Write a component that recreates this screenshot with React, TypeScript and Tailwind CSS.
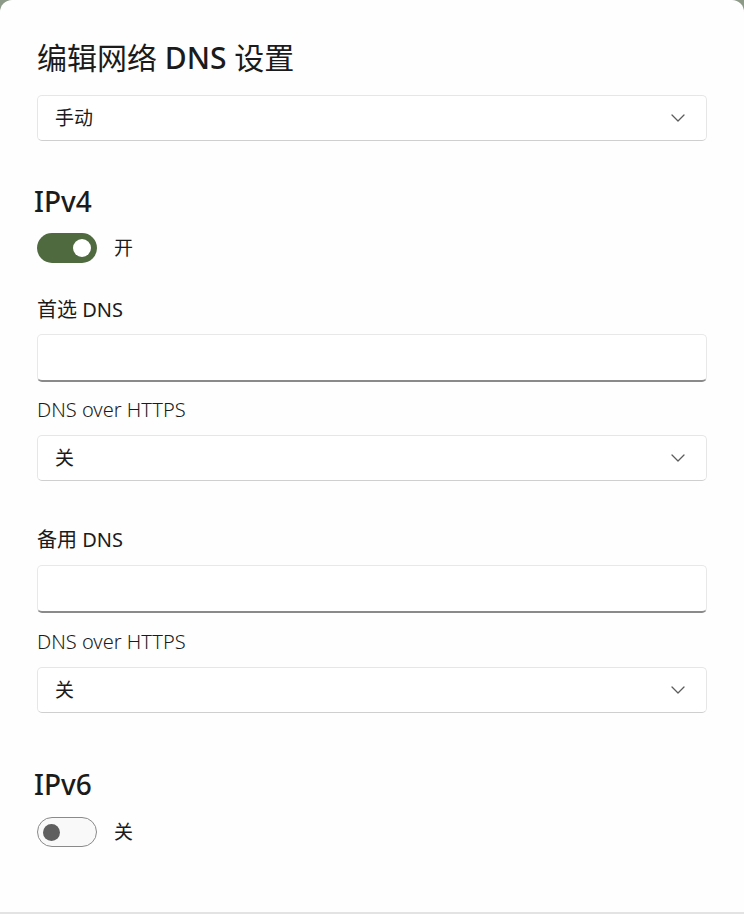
import React from 'react';

const font = { fontFamily: '"Noto Sans", "Noto Sans CJK SC", sans-serif' };

const Chevron: React.FC = () => (
  <svg width="14" height="8" viewBox="0 0 14 8" fill="none" className="text-[#5c5c5c]">
    <path d="M1 1l6 6 6-6" stroke="currentColor" strokeWidth="1.3" strokeLinecap="round" strokeLinejoin="round" />
  </svg>
);

const Select: React.FC<{ value: string }> = ({ value }) => (
  <div className="h-[46px] w-full rounded-[5px] border border-[#e6e6e6] border-b-[#cfcfcf] bg-white flex items-center justify-between pl-[17px] pr-[21px]">
    <span className="text-[19px] text-[#1b1b1b] leading-none">{value}</span>
    <Chevron />
  </div>
);

const TextBox: React.FC = () => (
  <div className="h-[48px] w-full rounded-[5px] border border-[#e8e8e8] border-b-2 border-b-[#8a8a8a] bg-white" />
);

const Toggle: React.FC<{ on: boolean; label: string }> = ({ on, label }) => (
  <div className="flex items-center h-[30px]">
    {on ? (
      <div className="w-[60px] h-[30px] rounded-full bg-[#4e6a3e] flex items-center justify-end pr-[6px]">
        <div className="w-[18px] h-[18px] rounded-full bg-white" />
      </div>
    ) : (
      <div className="w-[60px] h-[30px] rounded-full border-[1.5px] border-[#8a8a8a] bg-[#f9f9f9] flex items-center pl-[5px]">
        <div className="w-[17px] h-[17px] rounded-full bg-[#5f5f5f]" />
      </div>
    )}
    <span className="ml-[17px] text-[19px] text-[#1b1b1b]">{label}</span>
  </div>
);

const Label: React.FC<{ children: React.ReactNode; light?: boolean }> = ({ children, light }) => (
  <div
    className={
      light
        ? 'h-[26px] leading-[26px] text-[20px] font-light text-[#1b1b1b]'
        : 'h-[26px] leading-[26px] text-[20px] font-normal text-[#1b1b1b]'
    }
  >
    {children}
  </div>
);

export default function App() {
  return (
    <div className="w-[744px] h-[914px] bg-[#8d9a88] overflow-hidden" style={font}>
      <div className="h-full bg-[#fefefe] rounded-t-[12px] border-b-2 border-[#e3e3e3] px-[37px] pt-[40px] flex flex-col">
        <h1 className="h-[36px] leading-[36px] text-[30px] font-normal text-[#1b1b1b]">
          编辑网络 <span className="font-medium">DNS</span> 设置
        </h1>
        <div className="mt-[19px]">
          <Select value="手动" />
        </div>

        <h2 className="mt-[43px] -ml-[3px] h-[34px] leading-[34px] text-[28px] font-medium text-[#1b1b1b]">IPv4</h2>
        <div className="mt-[15px]">
          <Toggle on label="开" />
        </div>

        <div className="mt-[34px]">
          <Label>首选 DNS</Label>
        </div>
        <div className="mt-[11px]">
          <TextBox />
        </div>
        <div className="mt-[15px]">
          <Label light>DNS over HTTPS</Label>
        </div>
        <div className="mt-[12px]">
          <Select value="关" />
        </div>

        <div className="mt-[46px]">
          <Label>备用 DNS</Label>
        </div>
        <div className="mt-[12px]">
          <TextBox />
        </div>
        <div className="mt-[16px]">
          <Label light>DNS over HTTPS</Label>
        </div>
        <div className="mt-[12px]">
          <Select value="关" />
        </div>

        <h2 className="mt-[54px] -ml-[3px] h-[34px] leading-[34px] text-[28px] font-medium text-[#1b1b1b]">IPv6</h2>
        <div className="mt-[16px]">
          <Toggle on={false} label="关" />
        </div>
      </div>
    </div>
  );
}
